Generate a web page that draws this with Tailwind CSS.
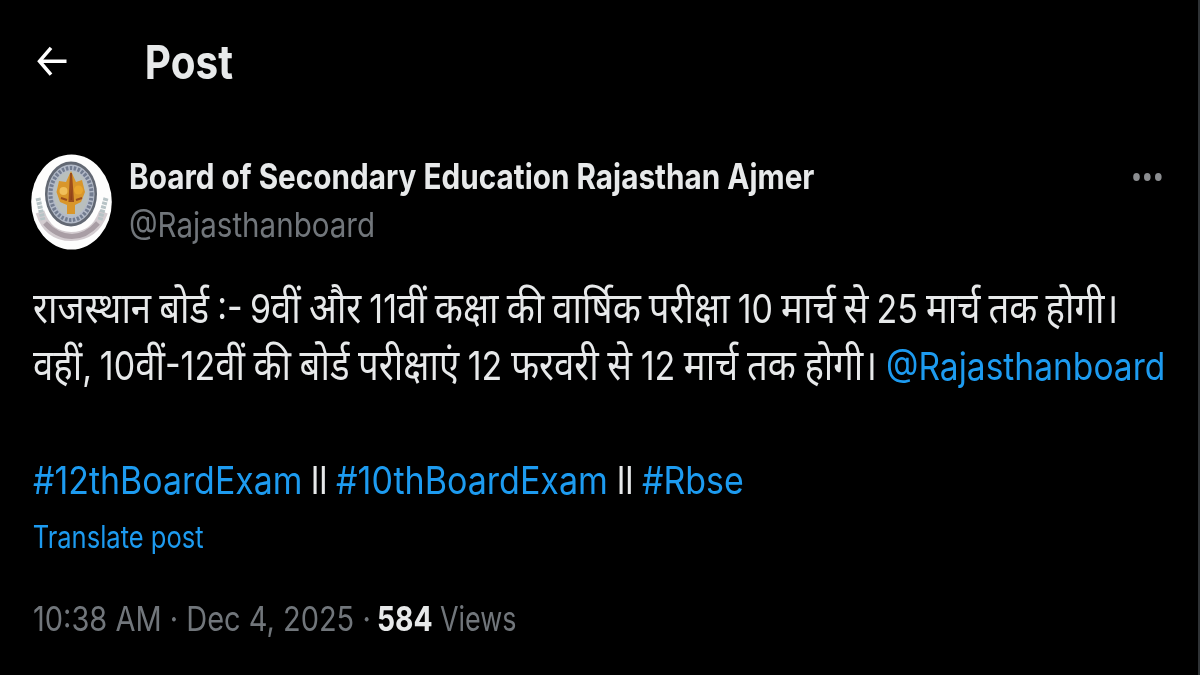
<!DOCTYPE html>
<html lang="hi">
  <head>
    <meta charset="UTF-8" />
    <meta name="viewport" content="width=device-width, initial-scale=1.0" />
    <title>Post</title>
    <script src="https://cdn.jsdelivr.net/npm/@tailwindcss/browser@4"></script>
  </head>
  <body
    class="h-screen overflow-hidden bg-black border-r-2 border-[#2f3336] text-[#e7e9ea] font-['Inter','Noto_Sans_Devanagari','Noto_Sans',sans-serif] whitespace-nowrap"
  >
    <header class="flex items-center h-[124px] pl-[36px]">
      <svg class="w-[32px] h-[32px]" viewBox="0 0 32 32" fill="none" stroke="#fff" stroke-width="3.500">
        <path d="M30.500 15.200H3.500M15 1.800L3.500 15.200L15 28.600" />
      </svg>
      <h1 class="ml-[76px] pb-[2px] pl-[1px] origin-left scale-x-[.86] text-[47px] leading-none font-bold">Post</h1>
    </header>

    <main class="pt-[28px] pl-[31px]">
      <div class="flex h-[96px]">
        <svg class="w-[81px] h-[96px] mt-[2px] shrink-0" viewBox="0 0 81 96">
          <ellipse cx="40.500" cy="48" rx="40.300" ry="47.500" fill="#fdfdfd" />
          <g class="blur-[0.7px]">
            <!-- ribbon -->
            <path d="M9 58C15 76 26 82.500 40 82.500C55 82.500 66 76 72.500 58" fill="none" stroke="#d3ccd0" stroke-width="9" />
            <path d="M14 69C23 79 31 82.500 41 82.500C51 82.500 59 78 67 69" fill="none" stroke="#a99ea5" stroke-width="5" />
            <path d="M7 44L12 66M75 44L69 66" stroke="#b7c3c6" stroke-width="5" stroke-dasharray="3 1" />
            <!-- seal -->
            <ellipse cx="40" cy="40" rx="26" ry="32.500" fill="#626873" />
            <ellipse cx="40" cy="40" rx="23.500" ry="29.500" fill="#b3bac8" />
            <ellipse cx="40" cy="40" rx="20.500" ry="26" fill="none" stroke="#737d91" stroke-width="4" stroke-dasharray="2.500 1.500" />
            <ellipse cx="40" cy="39.500" rx="17.500" ry="22.500" fill="#b9bfbd" />
            <path d="M40 17L45 28L51 26L54 38L50 48L44 51V60H36V51L29 48L25.500 38L28 27L35 28Z" fill="#d9962a" />
            <circle cx="32.500" cy="37" r="4" fill="#f0bf5a" />
            <circle cx="47.500" cy="36" r="4.500" fill="#e8a52e" />
            <path d="M40 19L42 47H38.500ZM30 44L36 46M45 46L51 44" fill="#8a3f18" stroke="#9b4d1c" stroke-width="2" />
          </g>
        </svg>
        <div class="ml-[17px] w-[686px]">
          <div class="origin-left scale-x-[.849] text-[35px] leading-[48px] font-bold">
            Board of Secondary Education Rajasthan Ajmer
          </div>
          <div class="pt-[1px] origin-left scale-x-[.857] text-[34.5px] leading-[48px] text-[#71767b]">@Rajasthanboard</div>
        </div>
        <svg class="ml-[317px] mt-[19px] w-[32px] h-[12px]" viewBox="0 0 32 12" fill="#8b8d90">
          <ellipse cx="4.500" cy="6" rx="3.300" ry="3.900" />
          <ellipse cx="15.300" cy="6" rx="3.300" ry="3.900" />
          <ellipse cx="26.300" cy="6" rx="3.300" ry="3.900" />
        </svg>
      </div>

      <div class="mt-[33px] pl-[2px] text-[38px] leading-[57px]">
        <div class="flex h-[57px]">
          <p class="w-[1084px] origin-left scale-x-[.85] text-[43px] leading-[53px] [word-spacing:-2.6px]">
            राजस्थान बोर्ड <span class="text-[40px]">:- 9</span>वीं और <span class="text-[40px]">11</span>वीं कक्षा की
            वार्षिक परीक्षा <span class="text-[40px]">10</span> मार्च से <span class="text-[40px]">25</span> मार्च तक होगी।
          </p>
        </div>
        <div class="flex h-[57px]">
          <p class="w-[853px] shrink-0 origin-left scale-x-[.85] text-[43px] leading-[53px] [word-spacing:-2px]">
            वहीं<span class="text-[40px]">, 10</span>वीं<span class="text-[40px]">-12</span>वीं की बोर्ड परीक्षाएं
            <span class="text-[40px]">12</span> फरवरी से <span class="text-[40px]">12</span> मार्च तक होगी।
          </p>
          <a class="w-[278px] origin-left scale-x-[.883] text-[#1d9bf0]">@Rajasthanboard</a>
        </div>
        <div class="h-[57px]"></div>
        <div class="flex h-[57px]">
          <a class="w-[278px] origin-left scale-x-[.892] text-[#1d9bf0]">#12thBoardExam</a>
          <span class="w-[25px] origin-left scale-x-[.89]">ll</span>
          <a class="w-[281px] origin-left scale-x-[.896] text-[#1d9bf0]">#10thBoardExam</a>
          <span class="w-[25px] origin-left scale-x-[.89]">ll</span>
          <a class="w-[120px] origin-left scale-x-[.893] text-[#1d9bf0]">#Rbse</a>
        </div>
      </div>
      <div class="pl-[2px] w-[300px] origin-left scale-x-[.823] text-[31px] leading-[56px] text-[#1d9bf0]">Translate post</div>

      <div class="mt-[30px] pl-[2px] flex text-[34.5px] leading-[48px] text-[#71767b]">
        <span class="w-[344px] origin-left scale-x-[.84]">10:38 AM · Dec 4, 2025 ·</span>
        <b class="w-[63px] origin-left scale-x-[.82] text-[#e7e9ea]">584</b>
        <span class="w-[100px] origin-left scale-x-[.78]">Views</span>
      </div>
    </main>
  </body>
</html>
